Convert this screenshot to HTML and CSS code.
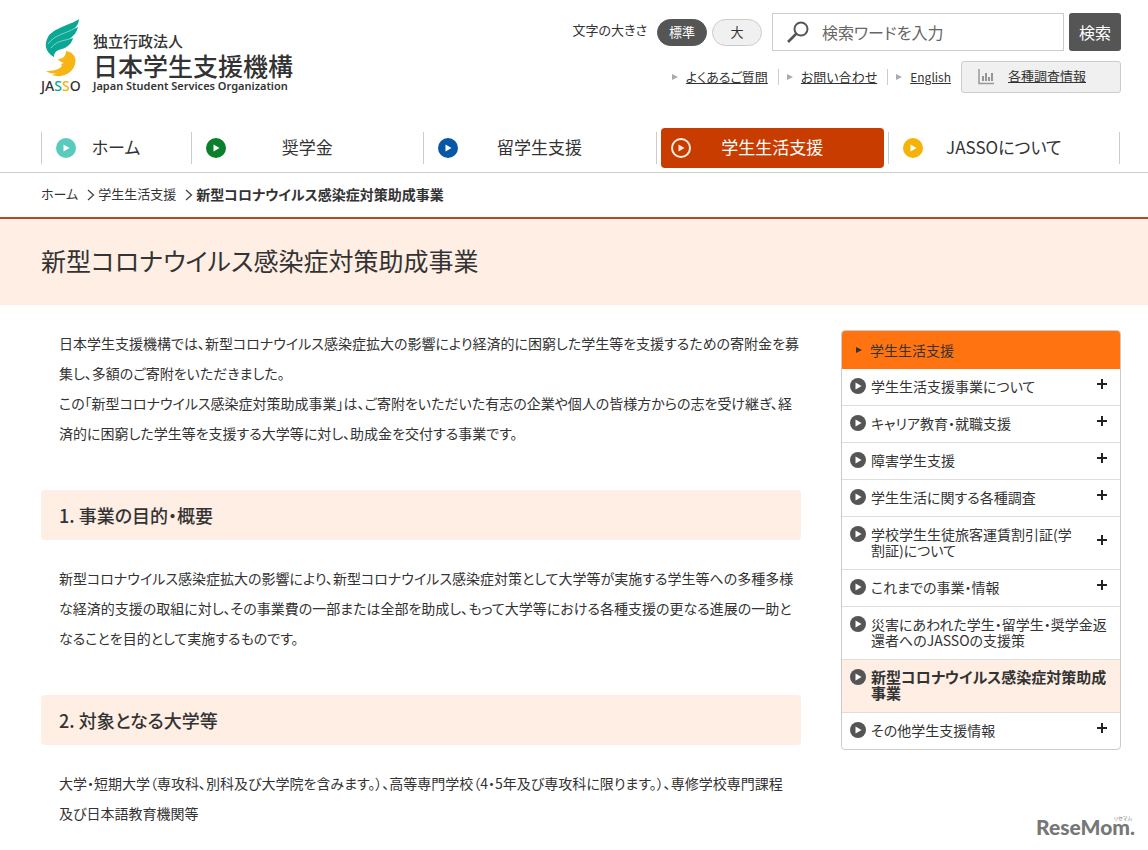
FILE: index.html
```
<!DOCTYPE html>
<html lang="ja">
<head>
    <meta charset="UTF-8">
    <meta name="viewport" content="width=device-width, initial-scale=1.0">
    <title>新型コロナウイルス感染症対策助成事業 - JASSO</title>
    <link rel="stylesheet" href="styles.css">
</head>
<body>
    <svg class="defs" width="0" height="0" aria-hidden="true">
        <symbol id="play" viewBox="0 0 20 20">
            <circle cx="10" cy="10" r="10" fill="currentColor"/>
            <path d="M7.500 6.500v7l6-3.500z" fill="#fff"/>
        </symbol>
        <symbol id="play-line" viewBox="0 0 20 20">
            <circle cx="10" cy="10" r="9" fill="none" stroke="currentColor" stroke-width="2"/>
            <path d="M7.500 6.500v7l6-3.500z" fill="currentColor"/>
        </symbol>
        <symbol id="play-small" viewBox="0 0 16 16">
            <circle cx="8" cy="8" r="8" fill="#555"/>
            <path d="M5.500 4.500v7l6-3.500z" fill="#fff"/>
        </symbol>
        <symbol id="tri" viewBox="0 0 6 8">
            <path d="M0 1v6l6-3z" fill="currentColor"/>
        </symbol>
        <symbol id="chevron" viewBox="0 0 8 12">
            <path d="M1 1l5.500 5L1 11" fill="none" stroke="#444" stroke-width="1.300"/>
        </symbol>
        <symbol id="plus" viewBox="0 0 10 10">
            <path d="M0 5h10M5 0v10" stroke="#222" stroke-width="2"/>
        </symbol>
    </svg>

    <header class="header">
        <div class="header-top">
            <a class="logo" href="#">
                <span class="logo-mark">
                    <svg width="40" height="60" viewBox="0 0 40 60" aria-hidden="true">
                        <path d="M38 1C32 6 12 10 7 19C3 26 4 34 13 39C13 34 16 32 21 31C27 29 31 25 32 20L28 21C33 18 36 14 37 9L33 11C36 8 38 5 38 1z" fill="#0ba795"/>
                        <path d="M7 26C14 16 25 16 34 10M10 30C16 22 24 23 31 20" fill="none" stroke="#7fd2c7" stroke-width="1"/>
                        <path d="M25 33C33 34 37 41 33 49C29 57 19 60 11 57L16 55C12 56 8 55 5 53C11 53 17 52 20 49C21 48 21 47 20 46L23 45C20 44 18 43 17 41C22 41 25 38 25 33z" fill="#f7b515"/>
                    </svg>
                    <span class="logo-name">JA<span class="green">S</span><span class="yellow">S</span>O</span>
                </span>
                <span class="logo-text">
                    <span class="logo-small">独立行政法人</span>
                    <span class="logo-large">日本学生支援機構</span>
                    <span class="logo-en">Japan Student Services Organization</span>
                </span>
            </a>
            <div class="tools">
                <div class="tools-row">
                    <span class="size-label">文字の大きさ</span>
                    <button class="size-btn on" type="button">標準</button>
                    <button class="size-btn" type="button">大</button>
                    <form class="search">
                        <div class="search-box">
                            <svg width="24" height="24" viewBox="0 0 24 24" aria-hidden="true">
                                <circle cx="15" cy="9" r="6.500" fill="none" stroke="#555" stroke-width="2"/>
                                <path d="M10.500 13.500L2 22" stroke="#555" stroke-width="2.600"/>
                            </svg>
                            <input type="text" placeholder="検索ワードを入力" aria-label="検索ワードを入力">
                        </div>
                        <button class="search-btn" type="submit">検索</button>
                    </form>
                </div>
                <div class="tools-row links">
                    <span class="link-item"><svg width="6" height="8"><use href="#tri"/></svg><a href="#">よくあるご質問</a></span>
                    <span class="link-item"><svg width="6" height="8"><use href="#tri"/></svg><a href="#">お問い合わせ</a></span>
                    <span class="link-item"><svg width="6" height="8"><use href="#tri"/></svg><a href="#">English</a></span>
                    <a class="survey" href="#">
                        <svg width="16" height="16" viewBox="0 0 16 16" aria-hidden="true">
                            <path d="M1 0v14.500h15" fill="none" stroke="#999" stroke-width="1.500"/>
                            <path d="M5 12V7M8 12V4M11 12V8M14 12V4" stroke="#777" stroke-width="1.500"/>
                        </svg>
                        <span>各種調査情報</span>
                    </a>
                </div>
            </div>
        </div>
        <nav class="nav">
            <a href="#"><svg class="teal"><use href="#play"/></svg><span>ホーム</span></a>
            <a href="#"><svg class="green"><use href="#play"/></svg><span>奨学金</span></a>
            <a href="#"><svg class="blue"><use href="#play"/></svg><span>留学生支援</span></a>
            <a class="active" href="#"><svg><use href="#play-line"/></svg><span>学生生活支援</span></a>
            <a href="#"><svg class="yellow"><use href="#play"/></svg><span>JASSOについて</span></a>
        </nav>
    </header>

    <div class="breadcrumb">
        <a href="#">ホーム</a>
        <svg width="8" height="12"><use href="#chevron"/></svg>
        <a href="#">学生生活支援</a>
        <svg width="8" height="12"><use href="#chevron"/></svg>
        <strong>新型コロナウイルス感染症対策助成事業</strong>
    </div>

    <div class="title">
        <h1>新型コロナウイルス感染症対策助成事業</h1>
    </div>

    <div class="content">
        <main class="main">
            <p>日本学生支援機構では、新型コロナウイルス感染症拡大の影響により経済的に困窮した学生等を支援するための寄附金を募集し、多額のご寄附をいただきました。<br>
            この「新型コロナウイルス感染症対策助成事業」は、ご寄附をいただいた有志の企業や個人の皆様方からの志を受け継ぎ、経済的に困窮した学生等を支援する大学等に対し、助成金を交付する事業です。</p>

            <h2>1. 事業の目的・概要</h2>
            <p>新型コロナウイルス感染症拡大の影響により、新型コロナウイルス感染症対策として大学等が実施する学生等への多種多様な経済的支援の取組に対し、その事業費の一部または全部を助成し、もって大学等における各種支援の更なる進展の一助となることを目的として実施するものです。</p>

            <h2>2. 対象となる大学等</h2>
            <p>大学・短期大学（専攻科、別科及び大学院を含みます。）、高等専門学校（4・5年及び専攻科に限ります。）、専修学校専門課程<br>及び日本語教育機関等</p>
        </main>

        <aside class="side">
            <a class="side-title" href="#"><svg width="6" height="8"><use href="#tri"/></svg>学生生活支援</a>
            <ul>
                <li><svg class="icon"><use href="#play-small"/></svg><a href="#">学生生活支援事業について</a><button type="button" aria-label="開く"><svg width="10" height="10"><use href="#plus"/></svg></button></li>
                <li><svg class="icon"><use href="#play-small"/></svg><a href="#">キャリア教育・就職支援</a><button type="button" aria-label="開く"><svg width="10" height="10"><use href="#plus"/></svg></button></li>
                <li><svg class="icon"><use href="#play-small"/></svg><a href="#">障害学生支援</a><button type="button" aria-label="開く"><svg width="10" height="10"><use href="#plus"/></svg></button></li>
                <li><svg class="icon"><use href="#play-small"/></svg><a href="#">学生生活に関する各種調査</a><button type="button" aria-label="開く"><svg width="10" height="10"><use href="#plus"/></svg></button></li>
                <li><svg class="icon"><use href="#play-small"/></svg><a href="#">学校学生生徒旅客運賃割引証(学割証)について</a><button type="button" aria-label="開く"><svg width="10" height="10"><use href="#plus"/></svg></button></li>
                <li><svg class="icon"><use href="#play-small"/></svg><a href="#">これまでの事業・情報</a><button type="button" aria-label="開く"><svg width="10" height="10"><use href="#plus"/></svg></button></li>
                <li><svg class="icon"><use href="#play-small"/></svg><a href="#">災害にあわれた学生・留学生・奨学金返還者へのJASSOの支援策</a></li>
                <li class="current"><svg class="icon"><use href="#play-small"/></svg><a href="#">新型コロナウイルス感染症対策助成事業</a></li>
                <li><svg class="icon"><use href="#play-small"/></svg><a href="#">その他学生支援情報</a><button type="button" aria-label="開く"><svg width="10" height="10"><use href="#plus"/></svg></button></li>
            </ul>
        </aside>
    </div>

    <div class="credit"><span class="credit-kana">リセマム</span>ReseMom.</div>
</body>
</html>
```
FILE: styles.css
```
* {
    box-sizing: border-box;
}
body {
    margin: 0;
    font-family: "Noto Sans CJK JP", sans-serif;
    font-feature-settings: "palt";
    font-size: 14px;
    color: #333;
    background: #fff;
}
a {
    color: inherit;
    text-decoration: none;
}
button, input {
    font: inherit;
    font-feature-settings: inherit;
    color: inherit;
}
svg {
    flex: none;
}
.defs {
    position: absolute;
}
.teal { color: #58cbbd; }
.green { color: #0a7f2c; }
.blue { color: #0857a4; }
.yellow { color: #f5b208; }

/* header */
.header {
    border-bottom: 1px solid #ccc;
    padding: 13px 27px 4px 41px;
}
.header-top {
    display: flex;
    justify-content: space-between;
    height: 115px;
}
.logo {
    display: flex;
    gap: 11px;
    padding-top: 5px;
}
.logo-mark {
    display: flex;
    flex-direction: column;
    width: 41px;
}
.logo-name {
    font-family: "Noto Sans", sans-serif;
    font-size: 14px;
    font-weight: 500;
    line-height: 16px;
}
.logo-name .green { color: #0ba795; }
.logo-text {
    display: flex;
    flex-direction: column;
    padding-top: 13px;
    font-weight: 500;
}
.logo-small {
    font-size: 15px;
    line-height: 20px;
}
.logo-large {
    font-size: 25px;
    line-height: 28px;
}
.logo-en {
    font-family: "Noto Sans", sans-serif;
    font-size: 11px;
    font-weight: 600;
    line-height: 14px;
}
.tools {
    display: flex;
    flex-direction: column;
    align-items: flex-end;
    gap: 10px;
}
.tools-row {
    display: flex;
    align-items: center;
}
.size-label {
    margin-right: 10px;
    padding-bottom: 5px;
    font-size: 13px;
}
.size-btn {
    width: 50px;
    height: 27px;
    margin-right: 5px;
    padding: 0;
    border: 1px solid #ccc;
    border-radius: 14px;
    background: #f0f0f0;
    font-size: 13px;
    line-height: 24px;
}
.size-btn.on {
    border-color: #555;
    background: #555;
    color: #fff;
}
.search {
    display: flex;
    gap: 5px;
    margin-left: 5px;
    font-size: 16px;
}
.search-box {
    display: flex;
    align-items: center;
    gap: 12px;
    width: 292px;
    height: 38px;
    padding: 0 13px;
    border: 1px solid #ccc;
}
.search-box input {
    flex: 1;
    min-width: 0;
    border: 0;
    padding: 0;
    outline: 0;
    background: none;
}
.search-box input::placeholder {
    color: #666;
}
.search-btn {
    width: 52px;
    border: 0;
    border-radius: 3px;
    padding: 0;
    background: #555;
    color: #fff;
}
.links {
    font-size: 13px;
}
.link-item {
    display: flex;
    align-items: center;
    gap: 8px;
    padding: 0 10px 0 8px;
    border-right: 1px solid #ccc;
    line-height: 16px;
    color: #aaa;
}
.link-item:nth-child(3) {
    border-right: 0;
    font-size: 12px;
}
.link-item a {
    color: #333;
    text-decoration: underline;
}
.survey {
    display: flex;
    align-items: center;
    gap: 14px;
    width: 160px;
    height: 32px;
    padding-left: 16px;
    border: 1px solid #ccc;
    border-radius: 3px;
    background: #f0f0f0;
}
.survey span {
    padding-bottom: 3px;
    text-decoration: underline;
}

/* main menu */
.nav {
    display: grid;
    grid-template-columns: 150fr repeat(4, 232fr);
    padding-right: 1px;
}
.nav a {
    position: relative;
    display: grid;
    grid-template-columns: 20px 1fr 20px;
    align-items: center;
    height: 40px;
    padding: 0 15px;
    font-size: 17px;
    text-align: center;
}
.nav a span {
    padding-bottom: 3px;
}
.nav a::before,
.nav a:last-child::after {
    content: "";
    position: absolute;
    top: 4px;
    left: 0;
    width: 1px;
    height: 32px;
    background: #ccc;
}
.nav a:last-child::after {
    left: auto;
    right: 0;
}
.nav svg {
    width: 20px;
    height: 20px;
}
.nav a.active {
    margin: 0 4px 0 5px;
    padding: 0 10px;
    border-radius: 4px;
    background: #c93c00;
    color: #fff;
}
.nav a.active::before {
    left: -5px;
}
.nav a.active svg {
    color: #ffeedd;
}

.breadcrumb {
    display: flex;
    align-items: center;
    height: 44px;
    padding: 0 27px 0 41px;
    font-size: 13px;
}
.breadcrumb a,
.breadcrumb strong {
    padding-bottom: 3px;
}
.breadcrumb strong {
    font-size: 14px;
}
.breadcrumb svg {
    margin: 0 3px 0 9px;
}
.title {
    border-top: 2px solid #b04a20;
    padding: 23px 27px 27px 41px;
    background: #feeee3;
}
.title h1 {
    margin: 0;
    font-size: 25px;
    font-weight: 400;
    line-height: 36px;
}

/* contents */
.content {
    display: flex;
    align-items: flex-start;
    gap: 40px;
    padding: 25px 27px 20px 41px;
}
.main {
    flex: 1;
    margin-top: -2px;
}
.main p {
    margin: 0;
    padding: 0 0 0 18px;
    line-height: 30px;
}
.main h2 {
    margin: 42px 0 23px;
    padding: 0 18px;
    border-radius: 4px;
    background: #feeee3;
    font-size: 18px;
    font-weight: 500;
    line-height: 50px;
}
.side {
    width: 280px;
    border: 1px solid #ccc;
    border-radius: 4px;
    overflow: hidden;
}
.side-title {
    display: flex;
    align-items: center;
    gap: 8px;
    height: 38px;
    padding-left: 14px;
    background: #ff7310;
}
.side ul {
    margin: 0;
    padding: 0;
    list-style: none;
}
.side li {
    display: flex;
    align-items: center;
    padding: 9px 12px 11px 8px;
    line-height: 16px;
}
.side li + li {
    border-top: 1px solid #ddd;
}
.side .icon {
    align-self: flex-start;
    width: 16px;
    height: 16px;
    margin-right: 5px;
}
.side li a {
    flex: 1;
}
.side li button {
    display: flex;
    margin-left: 20px;
    padding: 0 1px 4px 0;
    border: 0;
    background: none;
}
.side .current {
    background: #feeee3;
    font-size: 15px;
    font-weight: bold;
}

.credit {
    position: absolute;
    right: 13px;
    top: 814px;
    color: #777;
    font-family: "Lato", sans-serif;
    font-size: 21px;
    font-weight: 900;
    line-height: 26px;
}
.credit-kana {
    position: absolute;
    top: 1px;
    right: 3px;
    font-family: "Noto Sans CJK JP", sans-serif;
    font-size: 5px;
    font-weight: 400;
    line-height: 6px;
}
```
